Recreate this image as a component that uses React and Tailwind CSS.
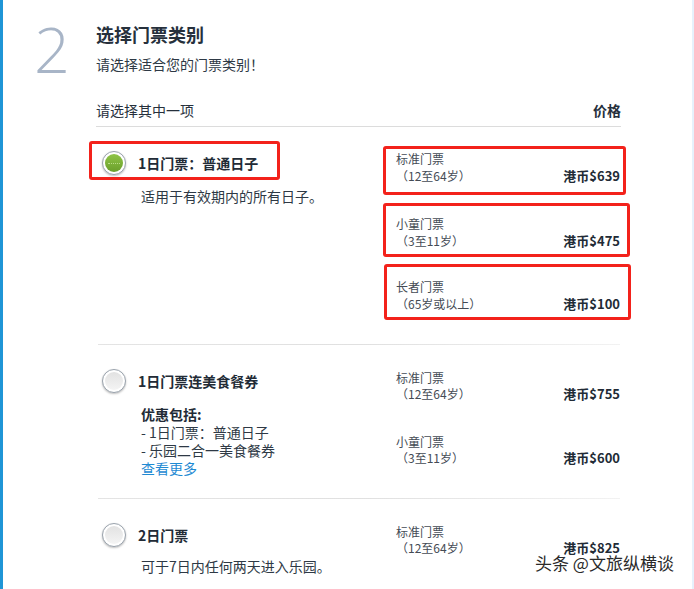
import React from 'react';

function Radio({ checked }) {
  return (
    <div className="w-[24px] h-[24px] shrink-0 rounded-full border border-[#9aa3ad] bg-white p-[2px] shadow-[0_1px_2px_rgba(0,0,0,0.25)]">
      {checked ? (
        <div className="w-full h-full rounded-full bg-gradient-to-b from-[#8fc447] to-[#6a9f2a] flex items-center justify-center">
          <div className="w-[12px] border-t border-dotted border-[#b9dd86]" />
        </div>
      ) : (
        <div className="w-full h-full rounded-full bg-gradient-to-b from-[#e2e2e2] to-[#f4f4f4]" />
      )}
    </div>
  );
}

function PriceLines({ label, age, price, lh }) {
  return (
    <>
      <div className={`text-[12px] text-[#444b55] ${lh}`}>{label}</div>
      <div className={`flex justify-between items-center ${lh}`}>
        <span className="text-[12px] text-[#444b55]">{age}</span>
        <span className="text-[13px] font-bold text-[#222b36]">{price}</span>
      </div>
    </>
  );
}

const Divider = () => <div className="ml-[2px] w-[522px] h-px bg-gradient-to-r from-[#e4e4e4] via-[#e0e0e0] to-[#f2f2f2]" />;

export default function App() {
  return (
    <div className="relative flex w-[694px] h-[589px] overflow-hidden bg-white text-[#2e3945] font-['Noto_Sans_CJK_SC',sans-serif]">
      <div className="w-[3px] shrink-0 bg-[#1f95d6]" />

      {/* step number */}
      <div className="w-[93px] shrink-0 pl-[31px] pt-[17px]">
        <div className="font-['Open_Sans',sans-serif] font-light text-[63px] leading-none text-[#a8b5c7]">2</div>
      </div>

      {/* main column */}
      <div className="w-[525px] shrink-0 pt-[22px]">
        <h2 className="text-[18px] leading-[24px] font-bold text-[#26303c]">选择门票类别</h2>
        <p className="mt-[8px] text-[14px] leading-[20px]">请选择适合您的门票类别！</p>

        <div className="mt-[26px] flex justify-between pb-[6px] border-b border-[#dcdcdc] text-[14px] leading-[20px]">
          <span className="text-[#26303c]">请选择其中一项</span>
          <span className="font-bold text-[#26303c]">价格</span>
        </div>

        {/* row 1 */}
        <div className="flex pb-[24px]">
          <div className="w-[287px] shrink-0">
            <div className="mt-[14px] -ml-[7px] w-[191px] h-[39px] flex items-center gap-[12px] pl-[10px] pt-[5px] border-[3px] border-[#f3221b] rounded-[3px]">
              <Radio checked />
              <span className="text-[14px] leading-[20px] font-bold text-[#222b36]">1日门票：普通日子</span>
            </div>
            <p className="mt-[6px] pl-[45px] text-[14px] leading-[20px]">适用于有效期内的所有日子。</p>
          </div>
          <div className="w-[238px]">
            <div className="mt-[19px] -mr-[5px] border-[3px] border-[#f3221b] rounded-[3px] pl-[10px] pr-[3px] pt-[1px] pb-[8px]">
              <PriceLines label="标准门票" age="（12至64岁）" price="港币$639" lh="leading-[17px]" />
            </div>
            <div className="mt-[8px] -mr-[9px] border-[3px] border-[#f3221b] rounded-[3px] pl-[10px] pr-[7px] pt-[9px] pb-[5px]">
              <PriceLines label="小童门票" age="（3至11岁）" price="港币$475" lh="leading-[17px]" />
            </div>
            <div className="mt-[7px] ml-[1px] -mr-[10px] border-[3px] border-[#f3221b] rounded-[3px] pl-[9px] pr-[8px] pt-[11px] pb-[5px]">
              <PriceLines label="长者门票" age="（65岁或以上）" price="港币$100" lh="leading-[17px]" />
            </div>
          </div>
        </div>
        <Divider />

        {/* row 2 */}
        <div className="flex pb-[21px]">
          <div className="w-[287px] shrink-0">
            <div className="mt-[24px] ml-[6px] flex items-center gap-[12px]">
              <Radio />
              <span className="text-[14px] leading-[20px] font-bold text-[#222b36]">1日门票连美食餐券</span>
            </div>
            <div className="mt-[12px] pl-[45px] text-[14px] leading-[18px]">
              <div className="font-bold text-[#222b36]">优惠包括:</div>
              <div>- 1日门票：普通日子</div>
              <div>- 乐园二合一美食餐券</div>
              <a href="#" className="text-[#1e8ad3]">查看更多</a>
            </div>
          </div>
          <div className="w-[238px] pl-[13px] pr-[1px]">
            <div className="mt-[25px]">
              <PriceLines label="标准门票" age="（12至64岁）" price="港币$755" lh="leading-[16px]" />
            </div>
            <div className="mt-[32px]">
              <PriceLines label="小童门票" age="（3至11岁）" price="港币$600" lh="leading-[16px]" />
            </div>
          </div>
        </div>
        <Divider />

        {/* row 3 */}
        <div className="flex">
          <div className="w-[287px] shrink-0">
            <div className="mt-[24px] ml-[6px] flex items-center gap-[12px]">
              <Radio />
              <span className="text-[14px] leading-[20px] font-bold text-[#222b36]">2日门票</span>
            </div>
            <p className="mt-[9px] pl-[45px] text-[14px] leading-[20px]">可于7日内任何两天进入乐园。</p>
          </div>
          <div className="w-[238px] pl-[13px] pr-[1px]">
            <div className="mt-[25px]">
              <PriceLines label="标准门票" age="（12至64岁）" price="港币$825" lh="leading-[16px]" />
            </div>
          </div>
        </div>
      </div>

      <div className="flex-1" />
      <div className="w-[2px] shrink-0 bg-[#e6f1fc]" />

      {/* watermark */}
      <div className="absolute left-[535px] top-[552px] text-[17px] leading-[22px] text-[#2a2a2a] [text-shadow:0_0_2px_#fff,0_0_2px_#fff]">
        头条 @文旅纵横谈
      </div>
    </div>
  );
}
